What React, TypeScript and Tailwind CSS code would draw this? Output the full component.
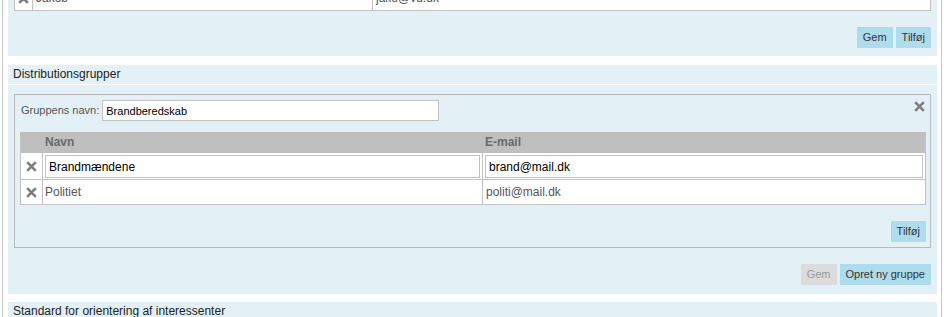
import React from 'react';

function XIcon({ className = '' }: { className?: string }) {
  return (
    <svg width="11" height="11" viewBox="0 0 11 11" className={className}>
      <path d="M1.2 1.2 L9.8 9.8 M9.8 1.2 L1.2 9.8" stroke="#7d7d7d" strokeWidth="2.6" />
    </svg>
  );
}

function Button({ label, disabled = false }: { label: string; disabled?: boolean }) {
  return (
    <button
      className={
        disabled
          ? 'h-[21px] px-[6px] bg-[#dcdcdc] text-[#9a9a9a] text-[11px] leading-[21px]'
          : 'h-[21px] px-[6px] bg-[#afdcec] text-[#333] text-[11px] leading-[21px]'
      }
    >
      {label}
    </button>
  );
}

function CellInput({ value }: { value: string }) {
  return (
    <input
      readOnly
      value={value}
      className="w-full h-[23px] border border-[#c2c2c2] bg-white px-[3px] text-[12px] text-black outline-none"
    />
  );
}

const members = [
  { name: 'Brandmændene', email: 'brand@mail.dk', editing: true },
  { name: 'Politiet', email: 'politi@mail.dk', editing: false },
];

export default function App() {
  return (
    <div className="w-[944px] h-[317px] overflow-hidden bg-white font-['Liberation_Sans',Arial,sans-serif] text-[12px] text-[#333]">
      <div className="ml-[2px] w-[940px] min-h-[340px] -mt-[15px] border-x border-[#c4c4c4] pl-[5px] pr-[4px]">
        {/* Kontakter (scrolled) */}
        <div className="bg-[#e3f1f6] px-[6px] pb-[8px]">
          <div className="grid grid-cols-[17px_340px_1fr] h-[26px] bg-white border border-[#c2c2c2]">
            <div className="flex items-center justify-center">
              <XIcon />
            </div>
            <div className="border-l border-[#c2c2c2] pl-[3px] leading-[24px] text-[12px] text-[#555]">Jakob</div>
            <div className="border-l border-[#c2c2c2] pl-[3px] leading-[24px] text-[12px] text-[#555]">jaku@vd.dk</div>
          </div>
          <div className="flex justify-end gap-[3px] mt-[16px]">
            <Button label="Gem" />
            <Button label="Tilføj" />
          </div>
        </div>

        {/* Distributionsgrupper */}
        <div className="mt-[9px] h-[19px] bg-[#e3f1f6] pl-[5px] leading-[19px] text-[#222]">Distributionsgrupper</div>
        <div className="mt-px bg-[#e3f1f6] px-[6px] pt-[9px] pb-[9px]">
          <div className="border border-[#b9b9b9] pt-[5px] pl-[5px] pr-[4px] pb-[5px]">
            <div className="flex items-start justify-between">
              <div className="flex items-center h-[21px]">
                <span className="pl-px text-[11px] text-[#555]">Gruppens navn:</span>
                <input
                  readOnly
                  value="Brandberedskab"
                  className="ml-[3px] w-[337px] h-[21px] border border-[#c2c2c2] bg-white px-[3px] text-[11px] text-black outline-none"
                />
              </div>
              <XIcon className="mt-px mr-px" />
            </div>

            <div className="mt-[11px] border-x border-b border-[#c2c2c2] bg-white">
              <div className="grid grid-cols-[21px_440px_1fr] h-[21px] bg-[#bfbfbf] font-bold text-[#6a6a6a] leading-[21px]">
                <div />
                <div className="pl-[3px]">Navn</div>
                <div className="pl-[3px]">E-mail</div>
              </div>
              {members.map((m, i) => (
                <div
                  key={i}
                  className={`grid grid-cols-[21px_440px_1fr] border-[#c2c2c2] ${i === 0 ? 'h-[27px] border-b' : 'h-[24px]'}`}
                >
                  <div className="flex items-center justify-center">
                    <XIcon />
                  </div>
                  {m.editing ? (
                    <>
                      <div className="border-l border-[#c2c2c2] px-[2px] pt-[2px]">
                        <CellInput value={m.name} />
                      </div>
                      <div className="border-l border-[#c2c2c2] px-[2px] pt-[2px]">
                        <CellInput value={m.email} />
                      </div>
                    </>
                  ) : (
                    <>
                      <div className="border-l border-[#c2c2c2] pl-[2px] leading-[24px] text-[#555]">{m.name}</div>
                      <div className="border-l border-[#c2c2c2] pl-[3px] leading-[24px] text-[#555]">{m.email}</div>
                    </>
                  )}
                </div>
              ))}
            </div>

            <div className="flex justify-end mt-[16px]">
              <Button label="Tilføj" />
            </div>
          </div>

          <div className="flex justify-end gap-[3px] mt-[16px]">
            <Button label="Gem" disabled />
            <Button label="Opret ny gruppe" />
          </div>
        </div>

        {/* Standard for orientering */}
        <div className="mt-[8px] h-[19px] bg-[#e3f1f6] pl-[5px] leading-[19px] text-[#222]">
          Standard for orientering af interessenter
        </div>
      </div>
    </div>
  );
}
